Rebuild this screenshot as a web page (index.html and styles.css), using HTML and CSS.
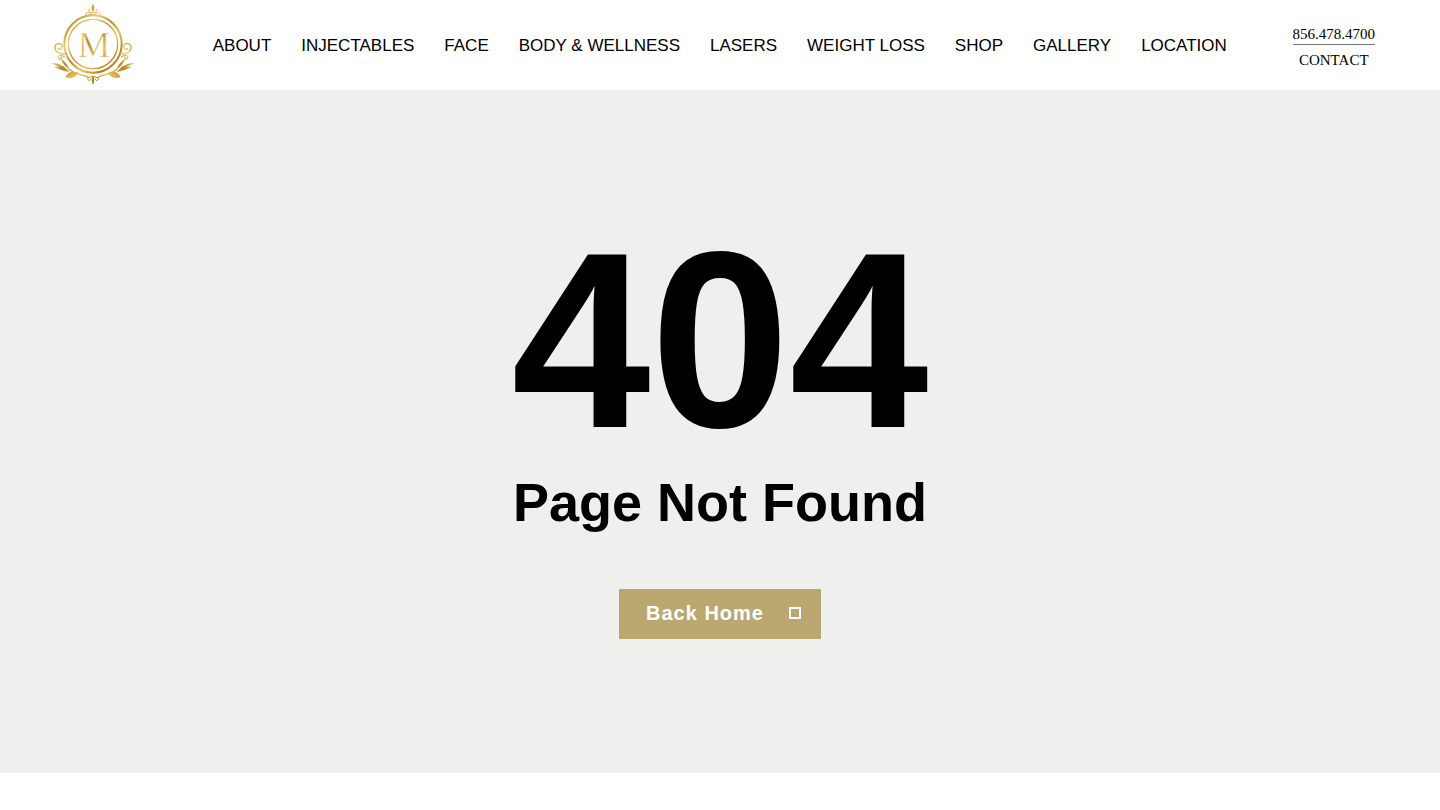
FILE: index.html
```html
<!DOCTYPE html>
<html lang="en">
<head>
<meta charset="utf-8">
<meta name="viewport" content="width=device-width, initial-scale=1">
<title>Page Not Found</title>
<link rel="stylesheet" href="styles.css">
</head>
<body>
<header class="header">
  <a class="logo" href="#" aria-label="Home">
    <svg class="logo-mark" viewBox="0 0 288 270" aria-hidden="true">
      <defs>
        <linearGradient id="gold" gradientUnits="userSpaceOnUse" x1="40" y1="30" x2="250" y2="240">
          <stop offset="0" stop-color="#b8861b"/>
          <stop offset=".2" stop-color="#c9982d"/>
          <stop offset=".32" stop-color="#f0d078"/>
          <stop offset=".45" stop-color="#b78622"/>
          <stop offset=".6" stop-color="#e6c45f"/>
          <stop offset=".75" stop-color="#b57f12"/>
          <stop offset="1" stop-color="#efcf68"/>
        </linearGradient>
        <g id="side">
          <path class="line" d="M62 160C50 164 32 158 30 145C28 129 50 125 52 139C53 148 43 151 40 145M58 171C49 162 37 166 40 174C43 180 51 176 48 171"/>
          <path class="fill" d="M18 189C38 187 56 196 72 214C52 206 36 197 18 189ZM27 201C43 198 60 205 75 217C57 213 42 207 27 201ZM47 176C59 182 68 194 73 208C60 199 51 189 47 176Z"/>
          <path class="fill" d="M61 232C68 215 83 212 101 218C92 232 78 238 61 232Z"/>
          <path class="line" d="M72 207C87 221 108 225 126 229"/>
        </g>
      </defs>
      <circle class="ring" cx="144" cy="132" r="86"/>
      <circle class="ring-inner" cx="144" cy="132" r="74"/>
      <use href="#side"/>
      <use href="#side" transform="translate(288 0) scale(-1 1)"/>
      <path class="fill" d="M144 12Q153 23 144 38Q135 23 144 12ZM144 225Q151 240 144 255Q137 240 144 225Z"/>
      <path class="line thin" d="M142 39C132 39 127 28 134 28M146 39C156 39 161 28 154 28M139 44C133 34 119 37 121 45M149 44C155 34 169 37 167 45M125 49Q144 38 163 49M128 233Q144 225 160 233M128 233C126 242 136 245 137 238M160 233C162 242 152 245 151 238"/>
      <text class="monogram" x="147" y="171">M</text>
    </svg>
  </a>
  <nav class="nav" aria-label="Main">
    <a href="#">ABOUT</a>
    <a href="#">INJECTABLES</a>
    <a href="#">FACE</a>
    <a href="#">BODY &amp; WELLNESS</a>
    <a href="#">LASERS</a>
    <a href="#">WEIGHT LOSS</a>
    <a href="#">SHOP</a>
    <a href="#">GALLERY</a>
    <a href="#">LOCATION</a>
  </nav>
  <div class="contact">
    <a class="phone" href="tel:8564784700">856.478.4700</a>
    <a href="#">CONTACT</a>
  </div>
</header>
<main class="error">
  <h1 class="code">404</h1>
  <h2 class="message">Page Not Found</h2>
  <a class="button" href="#">Back Home <span class="button-icon" aria-hidden="true"></span></a>
</main>
</body>
</html>
```

FILE: styles.css
```css
* {
  box-sizing: border-box;
}

body {
  margin: 0;
  background: #fff;
  color: #000;
  font-family: "Liberation Sans", Arial, sans-serif;
}

a {
  color: inherit;
  text-decoration: none;
}

.header {
  display: flex;
  align-items: center;
  justify-content: space-between;
  padding: 0 65px 0 45px;
}

.logo {
  display: block;
}

.logo-mark {
  display: block;
  width: 96px;
}

.ring,
.ring-inner,
.line {
  fill: none;
  stroke: url(#gold);
  stroke-width: 4;
  stroke-linecap: round;
}

.ring {
  stroke-width: 6;
}

.thin {
  stroke-width: 3;
}

.fill,
.monogram {
  fill: url(#gold);
}

.monogram {
  font-family: "Liberation Serif", serif;
  font-size: 110px;
  text-anchor: middle;
  stroke: #fff;
  stroke-width: 2;
}

.nav {
  display: flex;
  flex-wrap: wrap;
  justify-content: center;
  gap: 8px 30px;
  padding: 2px 0 0 6px;
  font-size: 17px;
  line-height: 24px;
}

.contact {
  display: flex;
  flex-direction: column;
  align-items: center;
  gap: 5px;
  padding-top: 3px;
  font-family: "Liberation Serif", "Times New Roman", serif;
  font-size: 15px;
  line-height: 20px;
}

.phone {
  border-bottom: 1px solid #777;
}

.error {
  display: flex;
  flex-direction: column;
  align-items: center;
  padding: 126px 20px 134px;
  background: #efefed;
}

.code {
  margin: 0;
  font-size: 250px;
  line-height: 250px;
}

.message {
  margin: 5px 0 56px;
  font-size: 54px;
  line-height: 62px;
}

.button {
  display: flex;
  align-items: center;
  gap: 25px;
  padding: 11px 20px 13px 27px;
  background: #bba871;
  color: #fff;
  font-size: 20px;
  font-weight: bold;
  line-height: 26px;
  letter-spacing: 1px;
}

.button-icon {
  width: 12px;
  height: 12px;
  border: 2px solid #fff;
}
```
